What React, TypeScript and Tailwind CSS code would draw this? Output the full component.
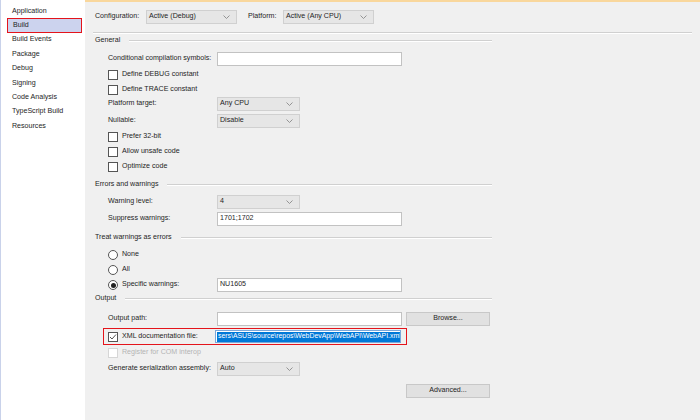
import React from 'react';

const font = { fontFamily: '"Liberation Sans", Arial, sans-serif' };

function Chevron() {
  return (
    <svg width="7" height="4" viewBox="0 0 7 4" className="shrink-0">
      <path d="M0.5 0.5 L3.5 3.5 L6.5 0.5" fill="none" stroke="#8a8a8a" strokeWidth="0.9" />
    </svg>
  );
}

function Select({ value, w = 'w-[83px]' }: { value: string; w?: string }) {
  return (
    <div className={`${w} h-[14px] flex items-center justify-between border border-[#d0d0d0] bg-[#e6e6e6] pl-[2px] pr-[6px] text-[#1e1e1e]`}>
      <span>{value}</span>
      <Chevron />
    </div>
  );
}

function Input({ value = '', w = 'w-[185px]' }: { value?: string; w?: string }) {
  return (
    <div className={`${w} h-[14px] flex items-center border border-[#c2c2c2] bg-white px-[2px] text-[#1e1e1e]`}>
      {value}
    </div>
  );
}

function Check({ checked, disabled }: { checked?: boolean; disabled?: boolean }) {
  return (
    <div className={`w-[10px] h-[10px] border ${disabled ? 'border-[#d6d6d6]' : 'border-[#555]'} bg-white flex items-center justify-center shrink-0`}>
      {checked && (
        <svg width="8" height="8" viewBox="0 0 8 8">
          <path d="M1 4 L3 6 L7 1.5" fill="none" stroke="#555" strokeWidth="1" />
        </svg>
      )}
    </div>
  );
}

function Radio({ on }: { on?: boolean }) {
  return (
    <div className="w-[10px] h-[10px] rounded-full border border-[#555] bg-white flex items-center justify-center shrink-0">
      {on && <div className="w-[5px] h-[5px] rounded-full bg-[#222]" />}
    </div>
  );
}

function Section({ title, className = '' }: { title: string; className?: string }) {
  return (
    <div className={`w-[399px] h-[14px] flex items-center pl-[2px] ${className}`}>
      <span className="text-[#1e1e1e]">{title}</span>
      <div className="ml-[9px] flex-1 border-t border-[#d0d0d0] border-b-white border-b" />
    </div>
  );
}

function CheckRow({ label, checked, disabled, className = '' }: { label: string; checked?: boolean; disabled?: boolean; className?: string }) {
  return (
    <div className={`h-[15px] flex items-center gap-[4px] pl-[15px] ${className}`}>
      <Check checked={checked} disabled={disabled} />
      <span className={disabled ? 'text-[#b4b4b4]' : 'text-[#1e1e1e]'}>{label}</span>
    </div>
  );
}

function FieldRow({ label, children, className = '' }: { label: string; children: React.ReactNode; className?: string }) {
  return (
    <div className={`h-[14px] flex items-center pl-[15px] ${className}`}>
      <span className="w-[109px] shrink-0 text-[#1e1e1e]">{label}</span>
      {children}
    </div>
  );
}

const nav = ['Application', 'Build', 'Build Events', 'Package', 'Debug', 'Signing', 'Code Analysis', 'TypeScript Build', 'Resources'];

export default function App() {
  return (
    <div className="w-[700px] h-[420px] flex bg-[#f0f0f0] text-[7.1px] leading-none whitespace-nowrap overflow-hidden" style={font}>
      <aside className="w-[85px] shrink-0 bg-white border-l border-[#c9d2ea] pt-[4px] pl-[6px] pr-[3px]">
        {nav.map(n => (
          <div
            key={n}
            className={`h-[14.4px] flex items-center pl-[5px] text-[#1e1e1e] ${n === 'Build' ? 'bg-[#ccd3ee] border-[1.5px] border-[#e4141b]' : ''}`}
          >
            {n}
          </div>
        ))}
      </aside>

      <main className="flex-1 flex flex-col border-t-2 border-[#f9d79c] pl-[8px] pt-[8px]">
        <div className="h-[14px] flex items-center pl-[2px]">
          <span className="w-[51px] text-[#1e1e1e]">Configuration:</span>
          <Select value="Active (Debug)" w="w-[91px]" />
          <span className="ml-[11px] w-[35px] text-[#1e1e1e]">Platform:</span>
          <Select value="Active (Any CPU)" w="w-[91px]" />
        </div>
        <div className="mt-[8px] w-[599px] border-t border-[#d0d0d0] border-b border-b-white" />

        <Section title="General" />
        <FieldRow label="Conditional compilation symbols:" className="mt-[4px]">
          <Input />
        </FieldRow>
        <CheckRow label="Define DEBUG constant" className="mt-[1px]" />
        <CheckRow label="Define TRACE constant" />
        <FieldRow label="Platform target:">
          <Select value="Any CPU" />
        </FieldRow>
        <FieldRow label="Nullable:" className="mt-[3px]">
          <Select value="Disable" />
        </FieldRow>
        <CheckRow label="Prefer 32-bit" className="mt-[1px]" />
        <CheckRow label="Allow unsafe code" />
        <CheckRow label="Optimize code" />

        <Section title="Errors and warnings" className="mt-[4px]" />
        <FieldRow label="Warning level:" className="mt-[3px]">
          <Select value="4" />
        </FieldRow>
        <FieldRow label="Suppress warnings:" className="mt-[3px]">
          <Input value="1701;1702" />
        </FieldRow>

        <Section title="Treat warnings as errors" className="mt-[5px]" />
        <div className="h-[15px] mt-[2px] flex items-center gap-[4px] pl-[15px]">
          <Radio />
          <span className="text-[#1e1e1e]">None</span>
        </div>
        <div className="h-[15px] flex items-center gap-[4px] pl-[15px]">
          <Radio />
          <span className="text-[#1e1e1e]">All</span>
        </div>
        <div className="h-[14px] mt-[1px] flex items-center pl-[15px]">
          <div className="w-[109px] flex items-center gap-[4px]">
            <Radio on />
            <span className="text-[#1e1e1e]">Specific warnings:</span>
          </div>
          <Input value="NU1605" />
        </div>

        <Section title="Output" />
        <FieldRow label="Output path:" className="mt-[6px]">
          <Input />
          <button className="ml-[4px] w-[84px] h-[14px] bg-[#e1e1e1] border border-[#c8c8c8] text-[#1e1e1e]">Browse...</button>
        </FieldRow>
        <div className="mt-[2px] ml-[10px] w-[304px] h-[17px] flex items-center border-[1.5px] border-[#e4141b] pl-[4px]">
          <div className="w-[107px] shrink-0 flex items-center gap-[4px]">
            <Check checked />
            <span className="text-[#1e1e1e]">XML documentation file:</span>
          </div>
          <div className="w-[186px] h-[13px] flex items-center border border-[#7aa7d9] bg-white px-[1px] overflow-hidden">
            <span className="bg-[#0078d7] text-white h-[10px] flex items-center px-[1px] text-[6.9px]">sers\ASUS\source\repos\WebDevApp\WebAPI\WebAPI.xml</span>
          </div>
        </div>
        <CheckRow label="Register for COM interop" disabled className="h-[14px]" />
        <FieldRow label="Generate serialization assembly:" className="mt-[2px]">
          <Select value="Auto" />
        </FieldRow>
        <div className="mt-[8px] ml-[313px]">
          <button className="w-[84px] h-[14px] bg-[#e1e1e1] border border-[#c8c8c8] text-[#1e1e1e]">Advanced...</button>
        </div>
      </main>
    </div>
  );
}
